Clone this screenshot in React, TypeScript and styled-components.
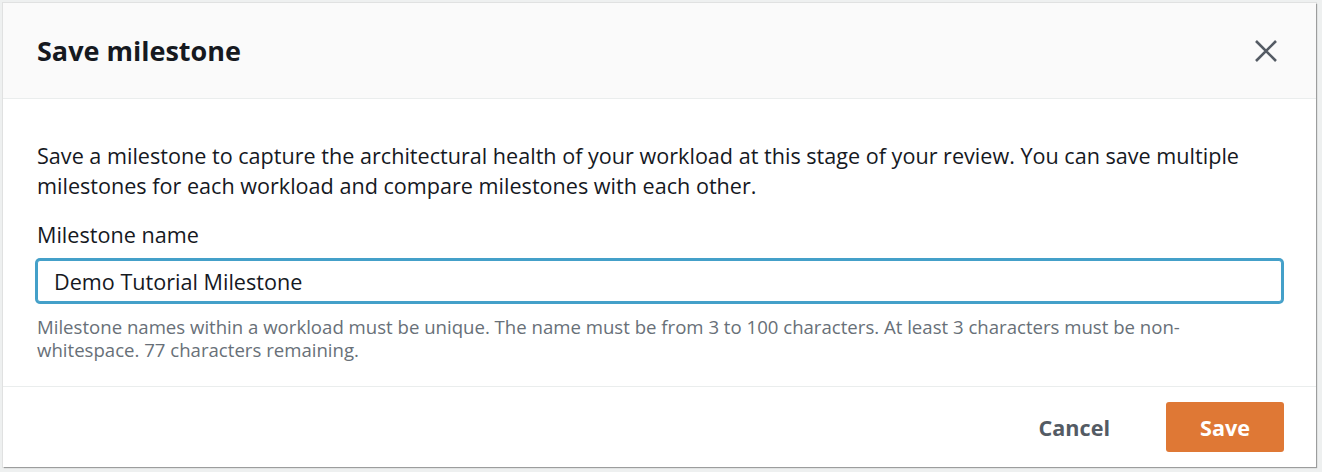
import React from "react";
import styled, { createGlobalStyle } from "styled-components";

const Global = createGlobalStyle`
  html, body { margin: 0; padding: 0; }
  body {
    background: #eef0f0;
    font-family: "Open Sans", "Noto Sans", Arial, sans-serif;
    color: #16191f;
  }
  * { box-sizing: border-box; }
`;

const Page = styled.div`
  padding: 3px 6px 5px 3px;
  width: 1322px;
  height: 472px;
`;

const Modal = styled.div`
  width: 1313px;
  height: 464px;
  background: #fff;
  box-shadow: 1px 1px 1px rgba(0, 0, 0, 0.3), 0 0 0 1px rgba(0, 0, 0, 0.06);
  display: flex;
  flex-direction: column;
`;

const Header = styled.div`
  height: 96px;
  background: #fafafa;
  border-bottom: 1px solid #eaeded;
  display: flex;
  align-items: center;
  justify-content: space-between;
  padding: 0 34px 0 34px;
`;

const Title = styled.h2`
  margin: 0;
  font-size: 27px;
  font-weight: 700;
  color: #16191f;
`;

const Close = styled.button`
  border: 0;
  background: none;
  padding: 0;
  width: 26px;
  height: 26px;
  display: flex;
  align-items: center;
  justify-content: center;
  color: #545b64;
  margin-right: 3px;
`;

const Body = styled.div`
  flex: 1;
  padding: 42px 34px 0 34px;
  border-bottom: 1px solid #eaeded;
`;

const Para = styled.p`
  margin: 0 0 19px 0;
  font-size: 21.6px;
  line-height: 30px;
`;

const Label = styled.label`
  display: block;
  font-size: 21.6px;
  line-height: 30px;
  margin-bottom: 10px;
`;

const Input = styled.input`
  display: block;
  width: 100%;
  height: 42px;
  border: 1px solid #44a0c9;
  box-shadow: 0 0 0 2px #44a0c9;
  border-radius: 3px;
  padding: 0 16px;
  font-family: inherit;
  font-size: 21.6px;
  color: #16191f;
  outline: none;
  background: #fff;
`;

const Help = styled.div`
  margin-top: 13px;
  font-size: 18.6px;
  line-height: 23px;
  color: #687078;
`;

const Footer = styled.div`
  height: 80px;
  display: flex;
  align-items: center;
  justify-content: flex-end;
  padding: 0 32px;
  gap: 36px;
`;

const Button = styled.button<{ $primary?: boolean }>`
  font-family: inherit;
  font-size: 21.6px;
  font-weight: 700;
  height: 50px;
  border-radius: 3px;
  border: 0;
  padding: 0 ${(p) => (p.$primary ? "30px" : "20px")};
  min-width: ${(p) => (p.$primary ? "118px" : "auto")};
  background: ${(p) => (p.$primary ? "#df7835" : "transparent")};
  color: ${(p) => (p.$primary ? "#fff" : "#545b64")};
  cursor: pointer;
`;

export default function App() {
  return (
    <>
      <Global />
      <Page>
        <Modal>
          <Header>
            <Title>Save milestone</Title>
            <Close aria-label="Close">
              <svg width="24" height="24" viewBox="0 0 24 24">
                <path d="M2 2 L22 22 M22 2 L2 22" stroke="currentColor" strokeWidth="2.6" fill="none" />
              </svg>
            </Close>
          </Header>
          <Body>
            <Para>
              Save a milestone to capture the architectural health of your workload at this stage of your review. You can save multiple milestones for each workload and compare milestones with each other.
            </Para>
            <Label>Milestone name</Label>
            <Input defaultValue="Demo Tutorial Milestone" />
            <Help>
              Milestone names within a workload must be unique. The name must be from 3 to 100 characters. At least 3 characters must be non-whitespace. 77 characters remaining.
            </Help>
          </Body>
          <Footer>
            <Button>Cancel</Button>
            <Button $primary>Save</Button>
          </Footer>
        </Modal>
      </Page>
    </>
  );
}
